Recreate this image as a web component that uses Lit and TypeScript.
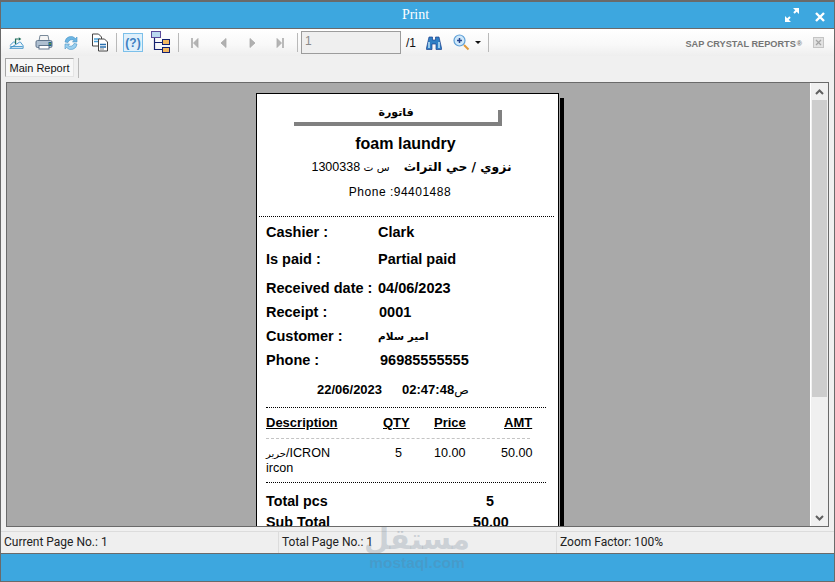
import { LitElement, css, html } from "lit";
import { customElement } from "lit/decorators.js";

const infoRows = [
  { label: "Cashier :", value: "Clark", cls: "r-cashier" },
  { label: "Is paid :", value: "Partial paid", cls: "r-paid" },
  { label: "Received date :", value: "04/06/2023", cls: "r-date" },
  { label: "Receipt :", value: "0001", cls: "r-receipt" },
  { label: "Customer :", value: "امير سلام", cls: "r-customer" },
  { label: "Phone :", value: "96985555555", cls: "r-phone" },
];

@customElement("app-root")
export class AppRoot extends LitElement {
  public static styles = css`
    :host {
      display: block;
      font-family: "Liberation Sans", Arial, sans-serif;
    }

    .window {
      position: relative;
      box-sizing: border-box;
      width: 835px;
      height: 582px;
      display: flex;
      flex-direction: column;
      background: #3da7df;
      border: 1px solid #6a6a6a;
      border-top-width: 2px;
      overflow: hidden;
    }

    .titlebar {
      flex: none;
      height: 26px;
      display: flex;
      align-items: center;
      justify-content: center;
      position: relative;
      color: #fff;
      font-family: "Liberation Serif", serif;
      font-size: 14px;
      padding-right: 4px;
      box-sizing: border-box;
    }

    .winbtns {
      position: absolute;
      right: 9px;
      top: 6px;
      display: flex;
      gap: 16px;
      align-items: flex-end;
    }

    .content {
      flex: none;
      height: 526px;
      display: flex;
      flex-direction: column;
      background: #f0f0f0;
      border-top: 1px solid #6a6a6a;
      border-bottom: 1px solid #6a6a6a;
      box-sizing: border-box;
    }

    .toolbar {
      flex: none;
      height: 27px;
      display: flex;
      align-items: center;
      background: linear-gradient(#ffffff, #f8f8f8 60%, #eeeeee);
      padding-left: 5px;
      box-sizing: border-box;
    }

    .tool {
      width: 20px;
      height: 20px;
      flex: none;
      display: flex;
      align-items: center;
      justify-content: center;
    }

    .sep {
      flex: none;
      width: 1px;
      height: 19px;
      background: #b9b9b9;
    }

    .pageinput {
      flex: none;
      box-sizing: border-box;
      width: 100px;
      height: 23px;
      margin-left: 3px;
      border: 1px solid #9c9c9c;
      background: #efefef;
      color: #8a8a8a;
      font-size: 12px;
      padding: 2px 0 0 3px;
    }

    .pagecount {
      flex: none;
      font-size: 12px;
      color: #111;
      margin-left: 5px;
      width: 18px;
    }

    .brand {
      margin-left: auto;
      display: flex;
      align-items: center;
      font-size: 9.2px;
      font-weight: 700;
      color: #757575;
      padding-right: 10px;
      padding-top: 2px;
      white-space: nowrap;
    }

    .brand small {
      font-size: 7px;
      margin-left: 1px;
    }

    .brand .close {
      margin-left: 11px;
      margin-top: -2px;
      display: flex;
    }

    .tabs {
      flex: none;
      height: 26px;
      display: flex;
      align-items: flex-start;
      padding: 2px 0 0 4px;
      box-sizing: border-box;
    }

    .tab {
      height: 19px;
      line-height: 18px;
      width: 69px;
      box-sizing: border-box;
      text-align: center;
      font-size: 11px;
      color: #111;
      background: #f7f7f7;
      border: 1px solid #a5a5a5;
      border-bottom-color: #e4e4e4;
      border-right-color: #e4e4e4;
    }

    .tabs .tabsep {
      width: 1px;
      height: 20px;
      margin-left: 4px;
      background: #b9b9b9;
    }

    .viewer {
      flex: none;
      margin-left: 5px;
      width: 823px;
      height: 445px;
      box-sizing: border-box;
      display: flex;
      background: #a9a9a9;
      border: 1px solid #6a6a6a;
      overflow: hidden;
    }

    .canvas {
      flex: 1;
      position: relative;
      overflow: hidden;
      padding: 10px 0 0 249px;
      box-sizing: border-box;
    }

    .scroll {
      flex: none;
      width: 17px;
      background: #f0f0f0;
      border-left: 1px solid #fff;
      display: flex;
      flex-direction: column;
      align-items: stretch;
      box-sizing: content-box;
    }

    .scroll .arrow {
      flex: none;
      height: 17px;
      display: flex;
      align-items: center;
      justify-content: center;
    }

    .scroll .thumb {
      flex: none;
      height: 297px;
      background: #cdcdcd;
      margin: 0 1px;
    }

    .scroll .track {
      flex: 1;
    }

    .page {
      position: relative;
      width: 303px;
      height: 600px;
      box-sizing: border-box;
      background: #fff;
      border: 1px solid #000;
      color: #000;
    }

    .page::after {
      content: "";
      position: absolute;
      left: 100%;
      top: 4px;
      bottom: -6px;
      width: 4px;
      margin-left: 2px;
      background: #000;
    }

    .stamp {
      box-sizing: border-box;
      margin: 16px 0 0 37px;
      width: 208px;
      height: 16px;
      border-right: 4px solid #808080;
      border-bottom: 4px solid #808080;
      font-family: "DejaVu Sans", sans-serif;
      font-weight: 700;
      font-size: 11px;
      line-height: 6px;
      text-align: center;
    }

    .shop {
      margin-top: 8px;
      height: 20px;
      line-height: 20px;
      font-size: 16px;
      font-weight: 700;
      text-align: center;
      padding-right: 4px;
    }

    .address {
      margin-top: 4px;
      height: 18px;
      line-height: 18px;
      display: flex;
      justify-content: center;
      gap: 14px;
      padding-left: 8px;
    }

    .address b {
      font-family: "DejaVu Sans", sans-serif;
      font-size: 12.3px;
    }

    .address .reg {
      font-size: 12.5px;
    }

    .address .reg i {
      font-style: normal;
      font-family: "DejaVu Sans", sans-serif;
      font-size: 10.5px;
    }

    .phone-line {
      margin-top: 8px;
      height: 16px;
      line-height: 16px;
      font-size: 12px;
      letter-spacing: 0.5px;
      text-align: center;
      padding-right: 15px;
    }

    .dots {
      border-top: 1px dotted #000;
      margin: 0 4px 0 2px;
      height: 0;
    }

    .dots.head {
      margin-top: 16px;
    }

    .rows {
      padding-left: 9px;
    }

    .row {
      display: grid;
      grid-template-columns: 112px 1fr;
      font-size: 14.5px;
      font-weight: 700;
      line-height: 18px;
      height: 18px;
      white-space: nowrap;
    }

    .r-cashier { margin-top: 6px; }
    .r-paid { margin-top: 9px; }
    .r-date { margin-top: 11px; }
    .r-receipt { margin-top: 6px; }
    .r-customer { margin-top: 6px; }
    .r-phone { margin-top: 6px; }

    .r-receipt span:last-child { padding-left: 1px; }
    .r-phone span:last-child { padding-left: 2px; }

    .r-customer span:last-child {
      font-family: "DejaVu Sans", sans-serif;
      font-size: 10.5px;
      font-weight: 700;
      width: 47px;
      text-align: right;
    }

    .stampline {
      margin: 13px 0 0 60px;
      height: 16px;
      line-height: 16px;
      display: flex;
      gap: 20px;
      font-size: 13px;
      font-weight: 700;
    }

    .stampline i {
      font-style: normal;
      font-family: "DejaVu Sans", sans-serif;
      font-size: 12px;
      font-weight: 400;
    }

    .dots.mid {
      margin: 9px 12px 0 9px;
    }

    .thead,
    .tbody {
      display: grid;
      grid-template-columns: 116px 52px 51px 1fr;
      padding-left: 9px;
      line-height: 15px;
    }

    .thead {
      margin-top: 7px;
      height: 15px;
      font-size: 13px;
      font-weight: 700;
      text-decoration: underline;
    }

    .thead .q {
      padding-left: 1px;
    }

    .thead .a {
      padding-left: 19px;
    }

    .rule {
      margin: 8px 28px 0 9px;
      border-top: 1px dashed #c4c4c4;
      height: 0;
    }

    .tbody {
      margin-top: 7px;
      height: 29px;
      font-size: 12.6px;
    }

    .tbody .desc {
      line-height: 14px;
    }

    .tbody .desc i {
      font-style: normal;
      font-family: "DejaVu Sans", sans-serif;
      font-size: 10px;
    }

    .tbody .q {
      padding-left: 13px;
    }

    .tbody .a {
      padding-left: 16px;
    }

    .dots.end {
      margin: 7px 12px 0 9px;
    }

    .total {
      display: grid;
      grid-template-columns: 207px 1fr;
      padding-left: 9px;
      font-size: 14.3px;
      font-weight: 700;
      line-height: 18px;
      height: 18px;
    }

    .total.first {
      margin-top: 9px;
      grid-template-columns: 220px 1fr;
    }

    .total.next {
      margin-top: 3px;
    }

    .status {
      flex: none;
      margin-top: 4px;
      height: 22px;
      display: grid;
      grid-template-columns: 278px 278px 1fr;
      align-items: center;
      border-top: 1px solid #dcdcdc;
      box-sizing: border-box;
      background: #efefef;
      font-size: 12px;
      color: #222;
      font-family: "Roboto", "Liberation Sans", sans-serif;
    }

    .status span {
      padding-left: 3px;
      height: 100%;
      line-height: 21px;
      border-right: 1px solid #dcdcdc;
      box-sizing: border-box;
    }

    .status span:last-child {
      border-right: none;
    }

    .mark {
      position: absolute;
      left: 352px;
      top: 517px;
      width: 128px;
      text-align: center;
      color: rgba(100, 120, 140, 0.25);
      pointer-events: none;
      font-weight: 700;
    }

    .mark .ar {
      font-family: "DejaVu Sans", sans-serif;
      font-size: 29px;
      line-height: 40px;
    }

    .mark .en {
      font-size: 15.5px;
      line-height: 16px;
      margin-top: -4px;
    }

    svg {
      display: block;
      overflow: visible;
    }
  `;

  private renderToolbar() {
    return html`<div class="toolbar">
      <div class="tool">
        <svg width="16" height="16" viewBox="0 0 18 18">
          <path d="M2 12 L6 8 H9 M13 8 H14 L17 12 V15 H2 Z" fill="#eaf4fb" stroke="#3a8fc8" />
          <path d="M2.5 13 H16.5" stroke="#3a8fc8" />
          <path d="M8.500 10 V4.500 H12" fill="none" stroke="#1e6d5c" stroke-width="1.400" />
          <path d="M12 2.500 L15 4.500 L12 6.500 Z" fill="#1e6d5c" />
        </svg>
      </div>
      <div class="tool" style="margin-left:8px">
        <svg width="18" height="17" viewBox="0 0 18 17">
          <path d="M5 1.500 H13 L14 7 H4 Z" fill="#f5f5f5" stroke="#7a8a9a" />
          <rect x="1" y="6.500" width="16" height="7" rx="1.500" fill="#aebfd0" stroke="#60758c" />
          <rect x="4" y="11.500" width="10" height="3.500" fill="#fff" stroke="#60758c" />
          <rect x="13.500" y="8" width="3" height="4" fill="#1d5f8c" />
          <rect x="14" y="9" width="2" height="1.500" fill="#6a9a3a" />
        </svg>
      </div>
      <div class="tool" style="margin-left:7px">
        <svg width="16" height="16" viewBox="0 0 16 16">
          <path d="M2 7 A6 6 0 0 1 12.500 3.500 L14 2 V7 H9.500 L11 5.500 A3.800 3.800 0 0 0 5 7.500 Z" fill="#6cb6e4" stroke="#4a94c6" stroke-width="0.600" />
          <path d="M14 9 A6 6 0 0 1 3.500 12.500 L2 14 V9 H6.500 L5 10.500 A3.800 3.800 0 0 0 11 8.500 Z" fill="#9bd0ef" stroke="#4a94c6" stroke-width="0.600" />
        </svg>
      </div>
      <div class="tool" style="margin-left:9px">
        <svg width="18" height="19" viewBox="0 0 18 19">
          <path d="M1.500 1 H7.500 L10.500 4 V13 H1.500 Z" fill="#fff" stroke="#444" />
          <path d="M3 6 H9 M3 8.500 H9" stroke="#4aa0d8" stroke-width="1.300" />
          <path d="M7.500 6 H13.500 L16.500 9 V18 H7.500 Z" fill="#fff" stroke="#444" />
          <path d="M9 11.500 H15 M9 14 H15" stroke="#2a70b0" stroke-width="1.300" />
          <path d="M9 16 H13" stroke="#888" />
        </svg>
      </div>
      <div class="sep" style="margin-left:6px"></div>
      <div class="tool" style="margin-left:6px">
        <svg width="20" height="19" viewBox="0 0 20 19">
          <rect x="0.500" y="0.500" width="19" height="18" fill="#dff0fb" stroke="#7cc0ea" />
          <text x="10" y="14" text-anchor="middle" font-family="Liberation Sans" font-size="12" font-weight="700" fill="#3d7fc0">(?)</text>
        </svg>
      </div>
      <div class="tool" style="margin-left:8px">
        <svg width="20" height="23" viewBox="0 0 20 23">
          <rect x="0.500" y="0.500" width="9" height="6" fill="#b9d9f0" stroke="#5a4a9a" />
          <path d="M3.500 7 V18.500 H11 M3.500 11.500 H11" fill="none" stroke="#14206e" stroke-width="1.200" />
          <rect x="11.500" y="8.500" width="7" height="5" fill="#f4b860" stroke="#14206e" />
          <rect x="11.500" y="16.500" width="7" height="5" fill="#f4b860" stroke="#14206e" />
        </svg>
      </div>
      <div class="sep" style="margin-left:7px"></div>
      <div class="tool" style="margin-left:6px">
        <svg width="8" height="10" viewBox="0 0 8 10"><path d="M0.500 0 V10 M1.500 0 V10 M7 0.500 L2.500 5 L7 9.500 Z" fill="#b4b4b4" stroke="#aaa" stroke-width="0.800" /></svg>
      </div>
      <div class="tool" style="margin-left:8px">
        <svg width="7" height="10" viewBox="0 0 7 10"><path d="M6 0.500 L1 5 L6 9.500 Z" fill="#b0b0b0" stroke="#aaa" stroke-width="0.800" /></svg>
      </div>
      <div class="tool" style="margin-left:9px">
        <svg width="7" height="10" viewBox="0 0 7 10"><path d="M1 0.500 L6 5 L1 9.500 Z" fill="#b0b0b0" stroke="#aaa" stroke-width="0.800" /></svg>
      </div>
      <div class="tool" style="margin-left:8px">
        <svg width="8" height="10" viewBox="0 0 8 10"><path d="M7.500 0 V10 M6.500 0 V10 M1 0.500 L5.500 5 L1 9.500 Z" fill="#b4b4b4" stroke="#aaa" stroke-width="0.800" /></svg>
      </div>
      <div class="sep" style="margin-left:7px"></div>
      <div class="pageinput">1</div>
      <div class="pagecount">/1</div>
      <div class="tool" style="margin-left:0">
        <svg width="16" height="14" viewBox="0 0 16 14">
          <path d="M3 1 H6.500 V4 H9.500 V1 H13 L15.500 12 V13.500 H10 V8 H6 V13.500 H0.500 V12 Z" fill="#2f7fc4" stroke="#1c3f8c" stroke-width="0.700" />
          <path d="M3 6 V12 M13 6 V12" stroke="#bfe3f8" stroke-width="1.500" />
        </svg>
      </div>
      <div class="tool" style="margin-left:7px">
        <svg width="17" height="18" viewBox="0 0 17 18">
          <circle cx="6.500" cy="6.500" r="5.500" fill="#cfe8fa" stroke="#5d9fd6" stroke-width="1.200" />
          <path d="M4 6.500 H9 M6.500 4 V9" stroke="#26438c" stroke-width="1.500" />
          <path d="M11 11 L15.500 15.500" stroke="#e09a3c" stroke-width="2" />
        </svg>
      </div>
      <svg style="margin-left:4px" width="6" height="3" viewBox="0 0 6 3"><path d="M0 0 H6 L3 3 Z" fill="#111" /></svg>
      <div class="sep" style="margin-left:7px"></div>
      <div class="brand">
        SAP CRYSTAL REPORTS<small>®</small>
        <span class="close">
          <svg width="11" height="11" viewBox="0 0 11 11">
            <rect x="0.500" y="0.500" width="10" height="10" fill="#e2e2e2" stroke="#c4c4c4" />
            <path d="M3 3 L8 8 M8 3 L3 8" stroke="#a4a4a4" stroke-width="1.200" />
          </svg>
        </span>
      </div>
    </div>`;
  }

  private renderReport() {
    return html`<div class="page">
      <div class="stamp">فاتورة</div>
      <div class="shop">foam laundry</div>
      <div class="address">
        <span class="reg">1300338 <i>س ت</i></span>
        <b dir="rtl">نزوي / حي التراث</b>
      </div>
      <div class="phone-line">Phone :94401488</div>
      <div class="dots head"></div>
      <div class="rows">
        ${infoRows.map(
          (r) => html`<div class="row ${r.cls}">
            <span>${r.label}</span><span>${r.value}</span>
          </div>`,
        )}
      </div>
      <div class="stampline">
        <span>22/06/2023</span>
        <span>02:47:48<i>ص</i></span>
      </div>
      <div class="dots mid"></div>
      <div class="thead">
        <span>Description</span><span class="q">QTY</span><span>Price</span
        ><span class="a">AMT</span>
      </div>
      <div class="rule"></div>
      <div class="tbody">
        <span class="desc"><i>حرير</i>/ICRON<br />ircon</span>
        <span class="q">5</span>
        <span>10.00</span>
        <span class="a">50.00</span>
      </div>
      <div class="dots end"></div>
      <div class="total first"><span>Total pcs</span><span>5</span></div>
      <div class="total next"><span>Sub Total</span><span>50.00</span></div>
    </div>`;
  }

  public render() {
    return html`<div class="window">
      <div class="titlebar">
        Print
        <div class="winbtns">
          <svg width="14" height="14" viewBox="0 0 14 14">
            <path d="M1 13 L5 9 M9 5 L13 1" stroke="#fff" stroke-width="2" />
            <path d="M0 8 V14 H6 Z M8 0 H14 V6 Z" fill="#fff" />
          </svg>
          <svg width="10" height="10" viewBox="0 0 10 10">
            <path d="M1 1 L9 9 M9 1 L1 9" stroke="#fff" stroke-width="2.400" />
          </svg>
        </div>
      </div>
      <div class="content">
        ${this.renderToolbar()}
        <div class="tabs">
          <div class="tab">Main Report</div>
          <div class="tabsep"></div>
        </div>
        <div class="viewer">
          <div class="canvas">${this.renderReport()}</div>
          <div class="scroll">
            <div class="arrow">
              <svg width="9" height="6" viewBox="0 0 9 6"><path d="M1 5 L4.500 1.500 L8 5" fill="none" stroke="#606060" stroke-width="2" /></svg>
            </div>
            <div class="thumb"></div>
            <div class="track"></div>
            <div class="arrow">
              <svg width="9" height="6" viewBox="0 0 9 6"><path d="M1 1 L4.500 4.500 L8 1" fill="none" stroke="#606060" stroke-width="2" /></svg>
            </div>
          </div>
        </div>
        <div class="status">
          <span>Current Page No.: 1</span>
          <span>Total Page No.: 1</span>
          <span>Zoom Factor: 100%</span>
        </div>
      </div>
      <div class="mark">
        <div class="ar">مستقل</div>
        <div class="en">mostaql.com</div>
      </div>
    </div>`;
  }
}
